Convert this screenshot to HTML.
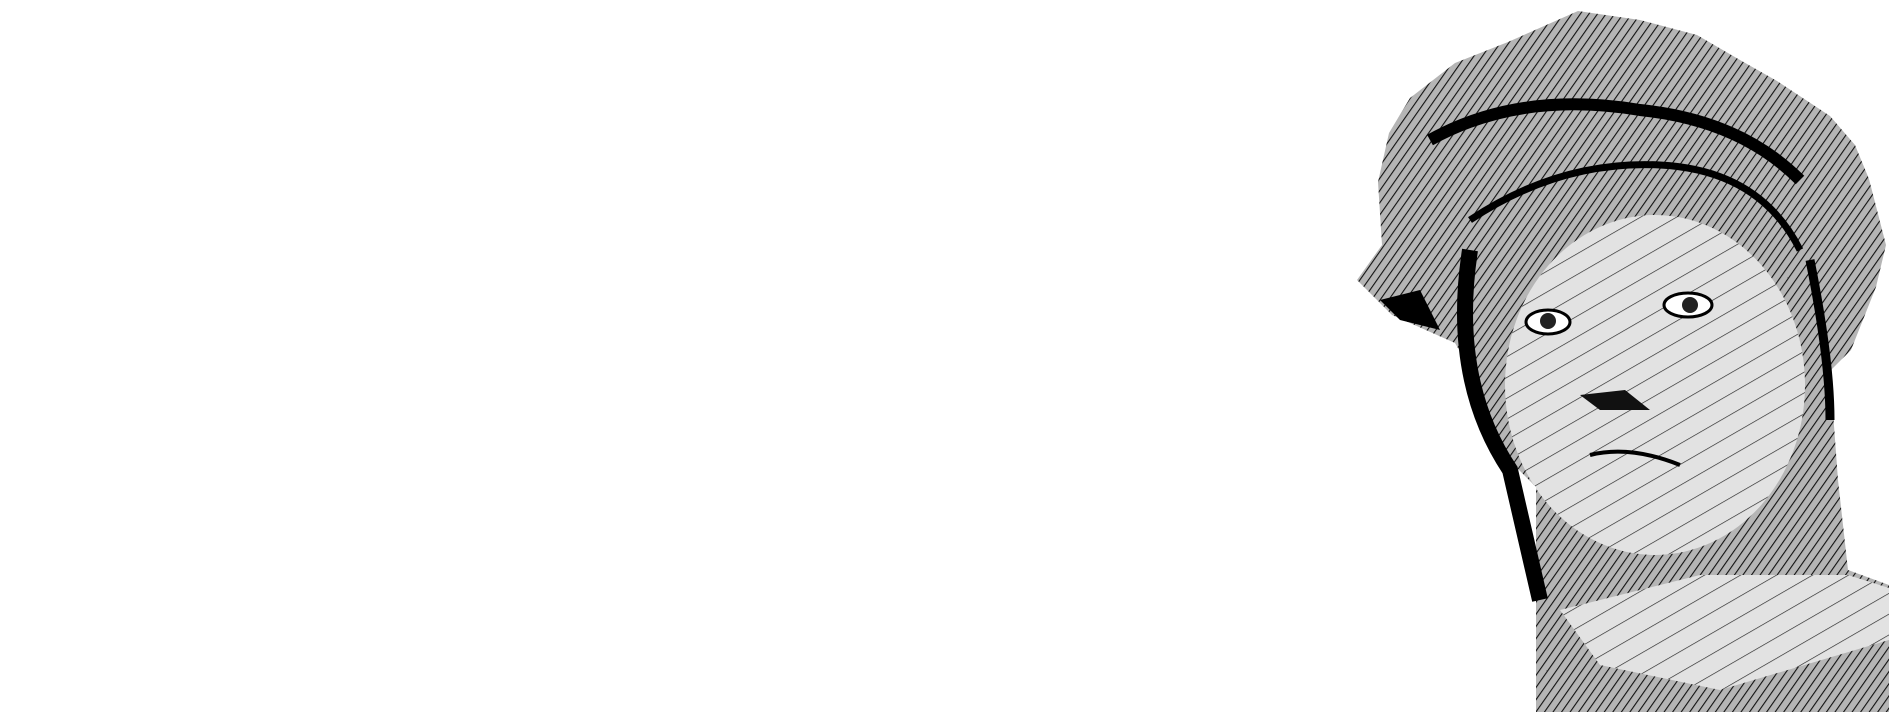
<!DOCTYPE html>
<html><head><meta charset="utf-8"><style>
html,body{margin:0;padding:0;background:#fff;width:1889px;height:712px;overflow:hidden}
svg{position:absolute;left:0;top:0}
</style></head><body>
<svg width="1889" height="712" viewBox="0 0 1889 712">
<defs>
<pattern id="h" width="7" height="7" patternUnits="userSpaceOnUse" patternTransform="rotate(35)">
<rect width="7" height="7" fill="#b5b5b5"/><line x1="0" y1="0" x2="0" y2="7" stroke="#111" stroke-width="2.2"/></pattern>
<pattern id="f" width="18" height="18" patternUnits="userSpaceOnUse" patternTransform="rotate(60)">
<rect width="18" height="18" fill="#e2e2e2"/><line x1="0" y1="0" x2="0" y2="18" stroke="#222" stroke-width="1.3"/></pattern>
<clipPath id="c"><polygon points="1508,42 1578,11 1640,20 1697,35 1740,60 1777,81 1830,116 1855,145 1869,179 1886,245 1876,287 1851,350 1830,371 1838,480 1848,570 1889,585 1889,712 1536,712 1536,487 1501,452 1480,385 1455,343 1392,315 1357,280 1382,245 1378,182 1389,133 1410,98 1455,63"/></clipPath>
</defs>
<g clip-path="url(#c)">
<rect x="1300" y="0" width="589" height="712" fill="url(#h)"/>
<ellipse cx="1655" cy="385" rx="150" ry="170" fill="url(#f)"/>
<polygon fill="url(#f)" points="1560,610 1700,575 1848,575 1889,588 1889,640 1720,690 1600,665"/>
</g>
<path d="M1430,140 Q1520,90 1640,110 Q1740,120 1800,180" stroke="#000" stroke-width="12" fill="none"/>
<path d="M1470,220 Q1560,160 1660,165 Q1760,170 1800,250" stroke="#000" stroke-width="7" fill="none"/>
<path d="M1470,250 Q1450,380 1510,470 L1540,600" stroke="#000" stroke-width="16" fill="none"/>
<path d="M1380,300 L1420,290 L1440,330 L1400,320Z" fill="#000"/>
<path d="M1810,260 Q1830,360 1830,420" stroke="#000" stroke-width="9" fill="none"/>
<ellipse cx="1548" cy="322" rx="22" ry="12" fill="#fff" stroke="#000" stroke-width="3"/>
<circle cx="1548" cy="321" r="8" fill="#222"/>
<ellipse cx="1688" cy="305" rx="24" ry="12" fill="#fff" stroke="#000" stroke-width="3"/>
<circle cx="1690" cy="305" r="8" fill="#222"/>
<path d="M1580,395 L1625,390 L1650,410 L1600,410Z" fill="#111"/>
<path d="M1590,455 Q1630,445 1680,465" stroke="#000" stroke-width="4" fill="none"/>
</svg>
</body></html>
